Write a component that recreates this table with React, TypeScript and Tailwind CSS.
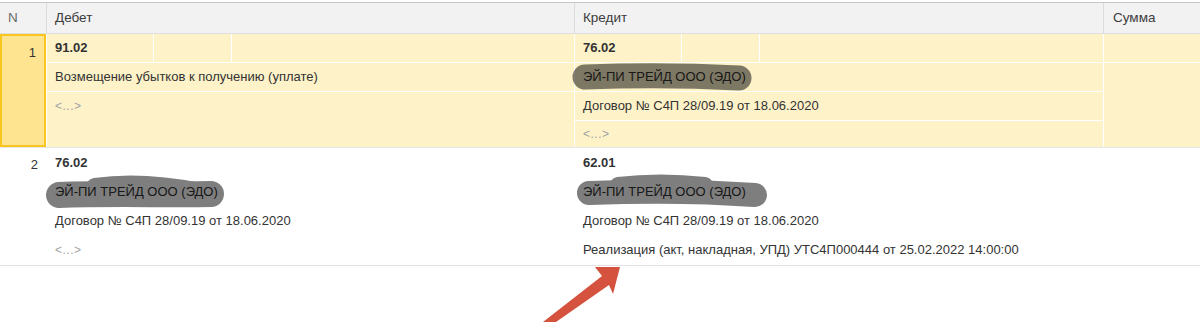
import React from "react";

const Dots = () => <span className="text-[12px] text-[#a3a3a3] tracking-[0.5px]">&lt;...&gt;</span>;

export default function App() {
  return (
    <div className="relative w-[1200px] h-[322px] bg-white font-['Liberation_Sans',Arial,sans-serif] text-[13px] text-[#333] overflow-hidden">
      <div className="h-[2px]" />
      {/* header */}
      <div className="flex h-[32px] bg-[#f2f2f2] border-t border-b border-t-[#c8c8c8] border-b-[#dedede] text-[#3c3c3c] text-[13.5px]">
        <div className="w-[47px] border-r border-[#dcdcdc] flex items-center pl-[8px] text-[#6a6a6a]">N</div>
        <div className="w-[528px] border-r border-[#dcdcdc] flex items-center pl-[8px]">Дебет</div>
        <div className="w-[529px] border-r border-[#dcdcdc] flex items-center pl-[8px]">Кредит</div>
        <div className="flex-1 flex items-center pl-[9px]">Сумма</div>
      </div>

      {/* row 1 (selected) */}
      <div className="flex h-[114px] bg-[#fdf2c8] border-b border-[#e6e6e6]">
        <div className="w-[47px] border-r border-white">
          <div className="h-full border-2 border-[#f8c61c] bg-[#fee390] flex justify-end pr-[8px] pt-[7px]">1</div>
        </div>
        <div className="w-[528px] border-r border-white flex flex-col">
          <div className="h-[29px] border-b border-white flex">
            <div className="w-[107px] border-r border-white flex items-center pl-[8px] font-bold">91.02</div>
            <div className="w-[78px] border-r border-white" />
            <div className="flex-1" />
          </div>
          <div className="h-[29px] border-b border-white flex items-center pl-[8px]">Возмещение убытков к получению (уплате)</div>
          <div className="h-[28px] flex items-center pl-[8px]"><Dots /></div>
        </div>
        <div className="w-[529px] border-r border-white flex flex-col">
          <div className="h-[29px] border-b border-white flex">
            <div className="w-[107px] border-r border-white flex items-center pl-[8px] font-bold">76.02</div>
            <div className="w-[78px] border-r border-white" />
            <div className="flex-1" />
          </div>
          <div className="h-[29px] border-b border-white flex items-center pl-[8px]">ЭЙ-ПИ ТРЕЙД ООО (ЭДО)</div>
          <div className="h-[29px] border-b border-white flex items-center pl-[8px]">Договор № С4П 28/09.19 от 18.06.2020</div>
          <div className="flex-1 flex items-center pl-[8px]"><Dots /></div>
        </div>
        <div className="flex-1 flex flex-col">
          <div className="h-[29px] border-b border-white" />
          <div className="flex-1" />
        </div>
      </div>

      {/* row 2 */}
      <div className="flex h-[118px] border-b border-[#e2e2e2]">
        <div className="w-[47px] flex justify-end pr-[9px] pt-[7px]">2</div>
        <div className="w-[528px] flex flex-col">
          <div className="h-[29px] flex items-center pl-[8px] font-bold">76.02</div>
          <div className="h-[29px] flex items-center pl-[8px]">ЭЙ-ПИ ТРЕЙД ООО (ЭДО)</div>
          <div className="h-[29px] flex items-center pl-[8px]">Договор № С4П 28/09.19 от 18.06.2020</div>
          <div className="h-[29px] flex items-center pl-[8px]"><Dots /></div>
        </div>
        <div className="w-[529px] flex flex-col">
          <div className="h-[29px] flex items-center pl-[8px] font-bold">62.01</div>
          <div className="h-[29px] flex items-center pl-[8px]">ЭЙ-ПИ ТРЕЙД ООО (ЭДО)</div>
          <div className="h-[29px] flex items-center pl-[8px]">Договор № С4П 28/09.19 от 18.06.2020</div>
          <div className="h-[29px] flex items-center pl-[8px]">Реализация (акт, накладная, УПД) УТС4П000444 от 25.02.2022 14:00:00</div>
        </div>
        <div className="flex-1" />
      </div>

      {/* overlay: redaction marks and arrow */}
      <svg className="absolute left-0 top-0 pointer-events-none" width="1200" height="322" viewBox="0 0 1200 322">
        <g opacity="0.5" stroke="#000" fill="none" strokeLinecap="round" strokeLinejoin="round">
          <path d="M585 77 C 640 75, 700 76, 739 78" strokeWidth="25" />
          <path d="M59 195 C 110 193, 170 195, 211 194" strokeWidth="26" />
          <path d="M95 187 C 130 182, 170 186, 200 192" strokeWidth="18" />
          <path d="M589 193 C 640 191, 700 191, 755 195" strokeWidth="24" />
          <path d="M618 185 Q 660 180 705 185" strokeWidth="16" />
        </g>
        <polygon points="620,267 595,267 602,276 543,322 556,322 609,285 613,294" fill="#d5523f" />
      </svg>
    </div>
  );
}
